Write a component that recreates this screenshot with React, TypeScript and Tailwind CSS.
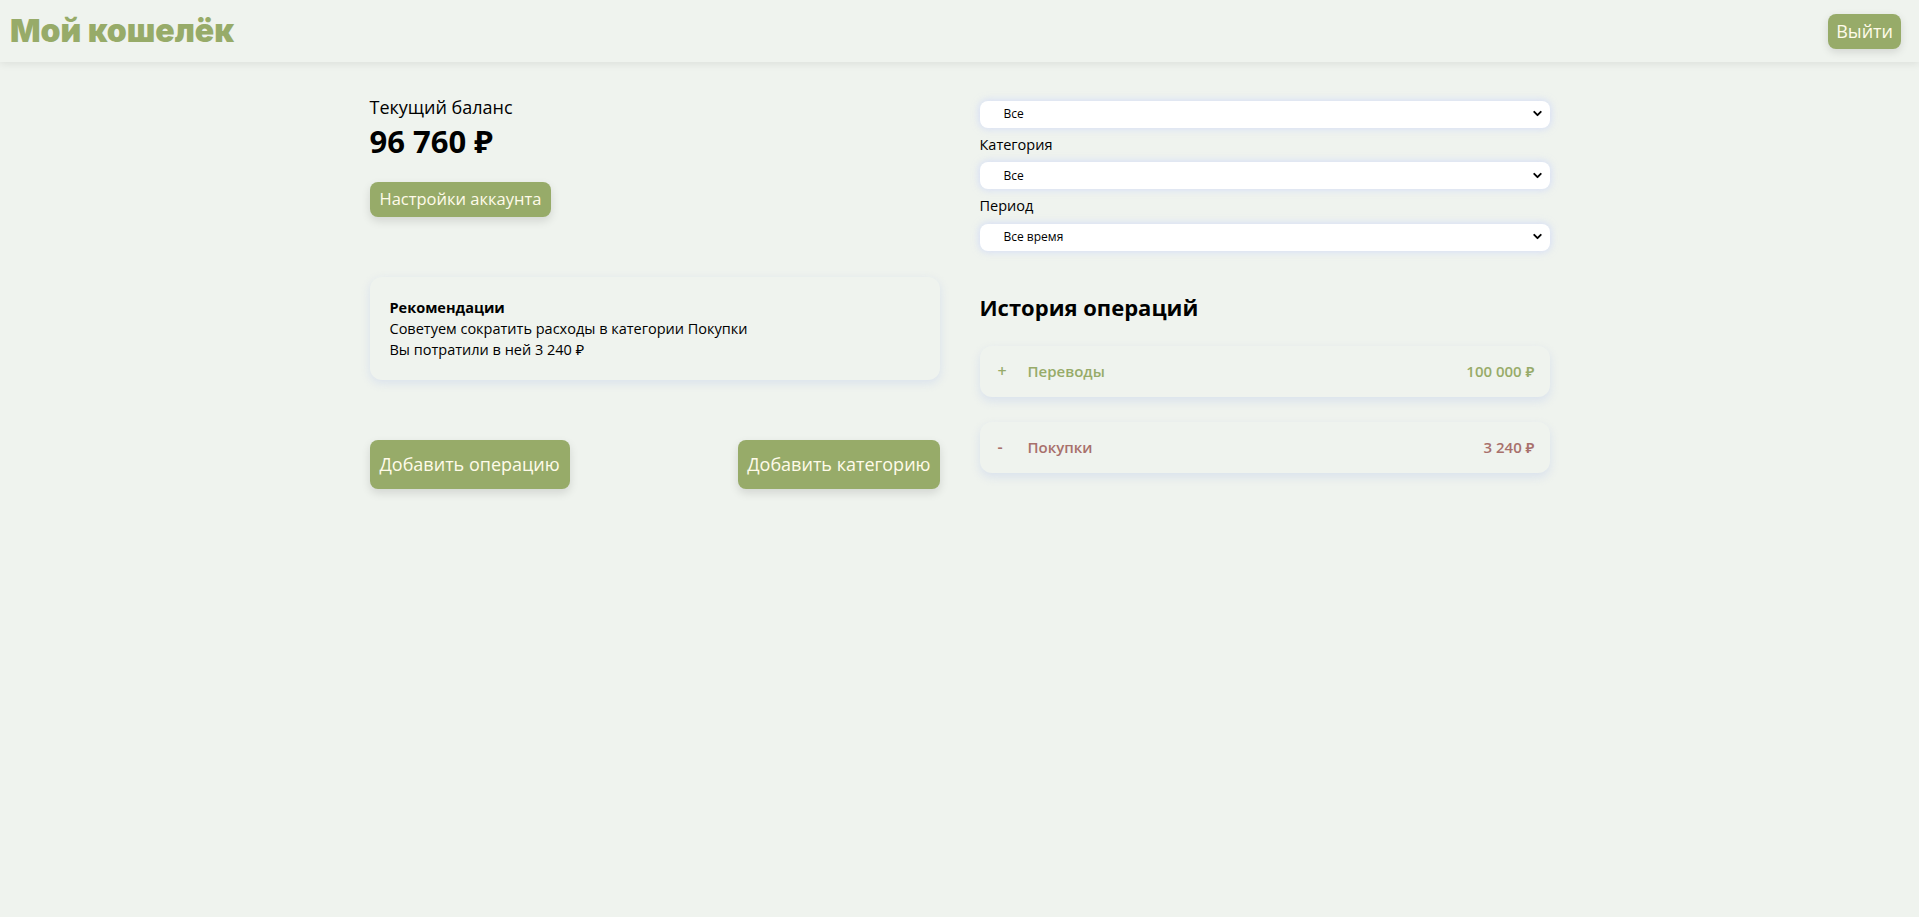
import React from 'react';
import { ChevronDown } from 'lucide-react';

const font = { fontFamily: '"Open Sans", "Noto Sans", sans-serif' };

const FilterSelect: React.FC<{ value: string }> = ({ value }) => (
  <div className="relative">
    <select
      defaultValue={value}
      className="w-full h-[27px] appearance-none rounded-lg bg-white pl-[24px] pr-8 text-[12px] text-black outline-none shadow-[0_0_6px_2px_rgba(200,212,250,0.55)]"
    >
      <option>{value}</option>
    </select>
    <ChevronDown size={13} strokeWidth={3.5} className="pointer-events-none absolute right-[6px] top-[7px] text-black" />
  </div>
);

const Operation: React.FC<{ sign: string; name: string; amount: string; tone: 'in' | 'out' }> = ({ sign, name, amount, tone }) => {
  const color = tone === 'in' ? 'text-[#97ab69]' : 'text-[#a8706b]';
  return (
    <div className="flex h-[51px] items-center rounded-xl bg-[#eff3ee] pl-[18px] pr-[15px] shadow-[0_4px_10px_rgba(190,205,235,0.45)]">
      <span className={`w-[30px] text-[16px] font-semibold ${color}`}>{sign}</span>
      <span className={`flex-1 text-[15px] font-semibold ${color}`}>{name}</span>
      <span className={`text-[15px] font-semibold ${color}`}>{amount}</span>
    </div>
  );
};

export default function App() {
  return (
    <div className="min-h-screen bg-[#eff3ee] text-black" style={font}>
      <header className="flex h-[62px] items-center justify-between bg-[#eff3ee] pl-[10px] pr-[18px] shadow-[0_2px_8px_rgba(0,0,0,0.08)]">
        <h1 className="text-[32px] font-black text-[#97ab69]" style={{ fontFamily: 'Inter, sans-serif' }}>
          Мой кошелёк
        </h1>
        <button className="h-[35px] rounded-lg bg-[#97ab69] px-[8px] text-[18px] text-[#fffbea] shadow-[0_3px_8px_rgba(0,0,0,0.12)]">
          Выйти
        </button>
      </header>

      <main className="mx-auto grid w-[1180px] grid-cols-2 gap-[40px] pt-[32px]">
        <section className="flex flex-col">
          <p className="text-[18px] leading-[26px]">Текущий баланс</p>
          <p className="mt-[2px] text-[31px] font-bold leading-[38px]">96 760 ₽</p>
          <div className="mt-[22px]">
            <button className="h-[35px] rounded-lg bg-[#97ab69] px-[10px] text-[16.5px] text-[#fffbea] shadow-[0_4px_10px_rgba(0,0,0,0.12)]">
              Настройки аккаунта
            </button>
          </div>

          <div className="mt-[60px] rounded-xl bg-[#eff3ee] px-[20px] py-[20px] text-[14.5px] leading-[21px] shadow-[0_3px_10px_rgba(190,205,235,0.45)]">
            <p className="font-bold">Рекомендации</p>
            <p>Советуем сократить расходы в категории Покупки</p>
            <p>Вы потратили в ней 3 240 ₽</p>
          </div>

          <div className="mt-[60px] flex items-center justify-between">
            <button className="h-[49px] rounded-lg bg-[#97ab69] px-[10px] text-[18px] text-[#fffbea] shadow-[0_4px_10px_rgba(0,0,0,0.12)]">
              Добавить операцию
            </button>
            <button className="h-[49px] rounded-lg bg-[#97ab69] px-[9px] text-[18px] text-[#fffbea] shadow-[0_4px_10px_rgba(0,0,0,0.12)]">
              Добавить категорию
            </button>
          </div>
        </section>

        <section className="flex flex-col pt-[6px]">
          <FilterSelect value="Все" />
          <label className="mt-[4px] mb-[4px] text-[14.5px] leading-[26px]">Категория</label>
          <FilterSelect value="Все" />
          <label className="mt-[4px] mb-[4px] text-[14.5px] leading-[26px]">Период</label>
          <FilterSelect value="Все время" />

          <h2 className="mt-[41px] text-[22px] font-bold leading-[30px]">История операций</h2>
          <div className="mt-[24px] flex flex-col gap-[25px]">
            <Operation sign="+" name="Переводы" amount="100 000 ₽" tone="in" />
            <Operation sign="-" name="Покупки" amount="3 240 ₽" tone="out" />
          </div>
        </section>
      </main>
    </div>
  );
}
